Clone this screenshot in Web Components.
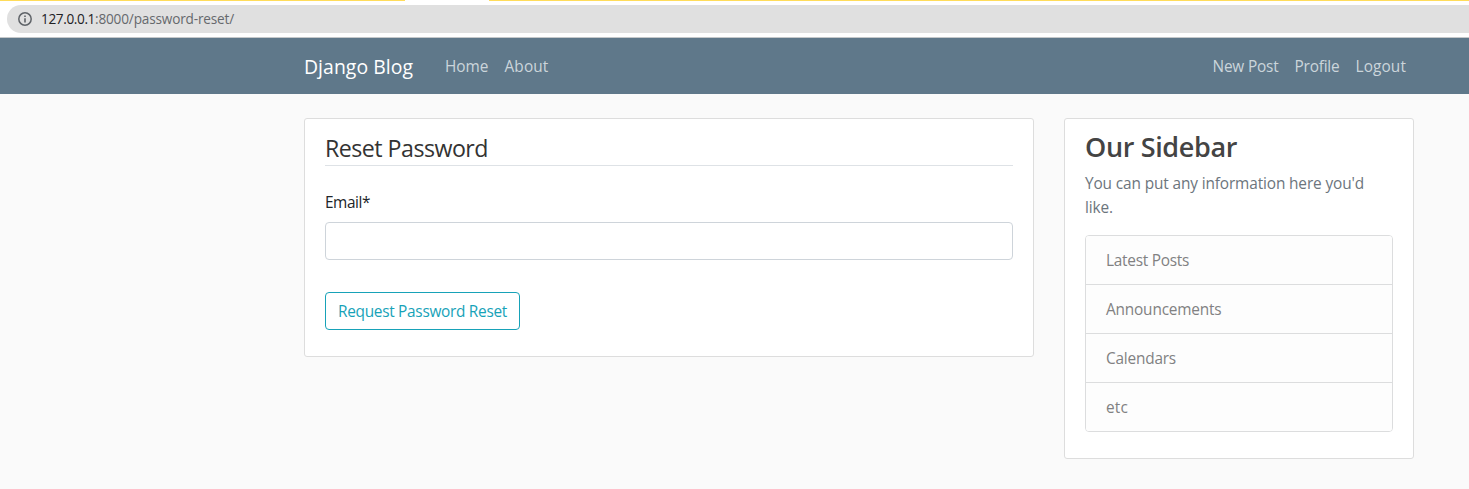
<!DOCTYPE html>
<html lang="en">
<head>
<meta charset="utf-8">
<title>Django Blog</title>
<style>
html,body{margin:0;height:100%;overflow:hidden;background:#fafafa}
body{font-family:"Open Sans","Noto Sans",sans-serif;font-size:15.4px;line-height:24px;color:#333}
</style>
</head>
<body>
<blog-page></blog-page>
<script>
const define = (name, markup, ready) => {
  const t = document.createElement('template');
  t.innerHTML = markup;
  customElements.define(name, class extends HTMLElement {
    connectedCallback() {
      if (this.shadowRoot) return;
      this.attachShadow({mode: 'open'}).append(t.content.cloneNode(true));
      if (ready) ready(this);
    }
  });
};

// Single line of text tracked to a fixed measure (attribute w, in px).
define('text-line', `<style>
:host{display:inline-block;white-space:nowrap}
span{display:inline-block;white-space:pre}
</style><span><slot></slot></span>`, el => {
  const span = el.shadowRoot.querySelector('span');
  const w = +el.getAttribute('w');
  const n = el.textContent.length;
  el.style.width = w + 'px';
  span.style.letterSpacing = (w - span.getBoundingClientRect().width) / n + 'px';
});

define('address-bar', `<style>
:host{display:block;height:38px;box-sizing:border-box;background:#fff;border-bottom:1px solid #c5c8ca}
.tabs{display:flex;height:1px}
.tabs i{background:#ffdc5a}
.tabs i:first-child{width:405px;margin-right:84px}
.tabs i:last-child{flex:1}
.pill{display:flex;align-items:center;height:28px;margin:4px 0 0 7px;padding-left:11px;background:#e0e0e0;border-radius:14px 0 0 14px;font-size:13.6px;color:#66696d}
svg{display:block;margin-right:9px}
b{font-weight:400;color:#202124}
.pill div{display:flex}
</style>
<div class="tabs"><i></i><i></i></div>
<div class="pill">
<svg width="14" height="14" viewBox="0 0 14 14"><circle cx="7" cy="7" r="6.2" fill="none" stroke="#5f6368" stroke-width="1.5"/><path d="M6.2 6.2h1.6v4.3H6.2zM6.2 3.5h1.6v1.6H6.2z" fill="#5f6368"/></svg>
<div><b><text-line w="54">127.0.0.1</text-line></b><text-line w="139">:8000/password-reset/</text-line></div>
</div>`);

define('nav-link', `<style>
:host{display:block;padding:0 8px;color:#cbd5db;height:24px;line-height:26px}
</style><slot></slot>`);

define('site-nav', `<style>
:host{display:flex;align-items:center;height:56px;padding:0 55px 0 304px;background:#5f788a}
.brand{font-size:19.4px;line-height:32px;color:#fff;margin-right:24px;height:30px}
nav{display:flex}
.right{margin-left:auto}
</style>
<div class="brand"><text-line w="109">Django Blog</text-line></div>
<nav><nav-link><text-line w="43.5">Home</text-line></nav-link><nav-link><text-line w="44">About</text-line></nav-link></nav>
<nav class="right"><nav-link><text-line w="66">New Post</text-line></nav-link><nav-link><text-line w="45">Profile</text-line></nav-link><nav-link><text-line w="50.5">Logout</text-line></nav-link></nav>`);

define('content-card', `<style>
:host{display:block;box-sizing:border-box;background:#fff;border:1px solid #ddd;border-radius:3px;padding:10px 20px 26px}
</style><slot></slot>`);

define('reset-form', `<style>
:host{display:block}
.legend{height:36px;line-height:39px;font-size:23.2px;border-bottom:1px solid #dee2e6;margin-bottom:24px}
.label{height:24px;line-height:26px;margin-bottom:8px;color:#212529}
input{display:block;box-sizing:border-box;width:100%;height:38px;border:1px solid #ced4da;border-radius:4px;background:#fff;margin:0 0 32px;padding:6px 12px}
button{display:block;box-sizing:border-box;height:38px;border:1px solid #17a2b8;border-radius:4px;background:none;color:#17a2b8;font:inherit;line-height:24px;padding:2px 12px 0}
</style>
<div class="legend"><text-line w="163">Reset Password</text-line></div>
<div class="label"><text-line w="45">Email*</text-line></div>
<input type="email" aria-label="Email">
<button><text-line w="169">Request Password Reset</text-line></button>`);

define('list-item', `<style>
:host{display:block;height:48px;line-height:49px;padding:0 20px;background:#fdfdfd;color:#818182;border-bottom:1px solid #dcddde}
:host(:last-child){border-bottom:0}
</style><slot></slot>`);

define('side-bar', `<style>
:host{display:block;color:#6c757d}
h3{margin:0 0 8px;height:34px;font-size:27px;line-height:36px;font-weight:600;color:#444}
p{margin:0;padding:1px 0 15px}
p text-line{display:block}
.list{border:1px solid #dcddde;border-radius:4px;overflow:hidden}
</style>
<h3><text-line w="152">Our Sidebar</text-line></h3>
<p><text-line w="279">You can put any information here you'd</text-line><text-line w="28">like.</text-line></p>
<div class="list">
<list-item><text-line w="83">Latest Posts</text-line></list-item>
<list-item><text-line w="115.5">Announcements</text-line></list-item>
<list-item><text-line w="70">Calendars</text-line></list-item>
<list-item><text-line w="22">etc</text-line></list-item>
</div>`);

define('blog-page', `<style>
:host{display:block}
main{display:grid;grid-template-columns:730px 350px;column-gap:30px;align-items:start;padding:24px 0 0 304px}
</style>
<address-bar></address-bar>
<site-nav></site-nav>
<main><content-card><reset-form></reset-form></content-card><content-card><side-bar></side-bar></content-card></main>`);
</script>
</body>
</html>
